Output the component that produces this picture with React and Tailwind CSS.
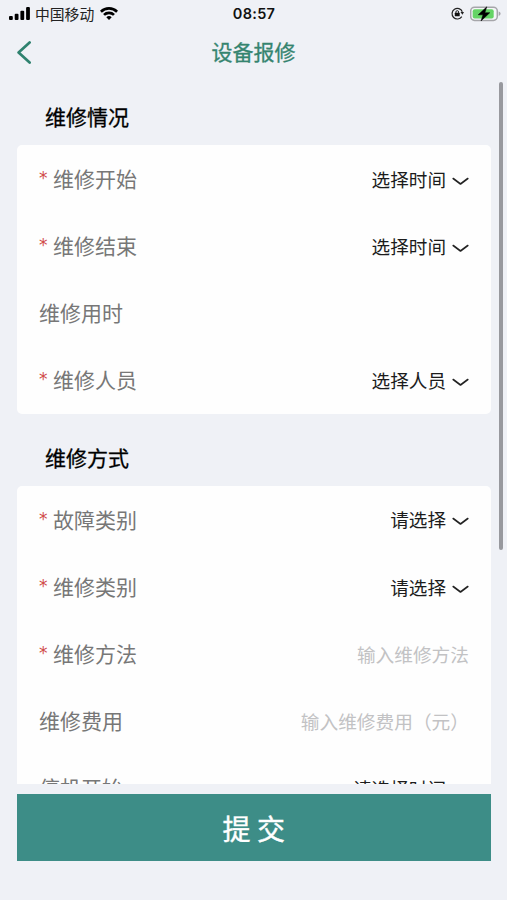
import React from "react";

const sections = [
  {
    title: "维修情况",
    rows: [
      { label: "维修开始", required: true, value: "选择时间" },
      { label: "维修结束", required: true, value: "选择时间" },
      { label: "维修用时" },
      { label: "维修人员", required: true, value: "选择人员" },
    ],
  },
  {
    title: "维修方式",
    rows: [
      { label: "故障类别", required: true, value: "请选择" },
      { label: "维修类别", required: true, value: "请选择" },
      { label: "维修方法", required: true, placeholder: "输入维修方法" },
      { label: "维修费用", placeholder: "输入维修费用（元）" },
      { label: "停机开始", value: "请选择时间" },
    ],
  },
];

const ChevronDown = () => (
  <svg className="ml-[6px] mt-[5px] h-[9px] w-[17px]" viewBox="0 0 17 9" fill="none">
    <path d="M1.2 1.5 L8.5 7 L15.8 1.5" stroke="#222" strokeWidth="1.6" strokeLinecap="round" strokeLinejoin="round" />
  </svg>
);

const StatusBar = () => (
  <div className="grid h-[27px] shrink-0 grid-cols-3 items-center pl-[9px] pr-[6px] text-black">
    <div className="flex items-center">
      <svg className="h-[13px] w-[21px]" viewBox="0 0 21 13">
        <rect x="0" y="9" width="3.8" height="4" rx="1" />
        <rect x="5.7" y="6.8" width="3.8" height="6.2" rx="1" />
        <rect x="11.4" y="3.8" width="3.8" height="9.2" rx="1" />
        <rect x="17.1" y="0" width="3.8" height="13" rx="1" />
      </svg>
      <span className="ml-[5px] text-[14.8px] leading-[26px] text-[#222]">中国移动</span>
      <svg className="ml-[6px] h-[13px] w-[18px] shrink-0" viewBox="0 0 18 13" fill="none" stroke="#000" strokeWidth="2.7">
        <path d="M0.9 4.7 A11.6 11.6 0 0 1 17.1 4.7" />
        <path d="M4 7.9 A7.1 7.1 0 0 1 14 7.9" />
        <path d="M9 13 L6.3 10.2 A3.9 3.9 0 0 1 11.7 10.2 Z" fill="#000" stroke="none" />
      </svg>
    </div>
    <span className="pr-[2px] text-center font-[Inter] text-[14.5px] font-semibold tracking-[0.3px] text-[#111]">08:57</span>
    <div className="flex items-center justify-end">
      <svg className="h-[13px] w-[13px]" viewBox="0 0 13 13" fill="none" stroke="#222">
        <path d="M10.8 9.6 A5.3 5.3 0 1 1 11.3 4.8" strokeWidth="1.2" />
        <path d="M9.5 5 L13 5 L11.4 7.8 Z" fill="#222" stroke="none" />
        <rect x="3.8" y="5.8" width="4.9" height="3.5" rx="0.5" fill="#111" stroke="none" />
        <path d="M4.9 6 V5 A1.35 1.35 0 0 1 7.6 5 V6" strokeWidth="1" />
      </svg>
      <svg className="ml-[6px] h-4 w-[31px]" viewBox="0 0 31 16">
        <rect x="0.7" y="1.2" width="26.6" height="13.2" rx="3.8" fill="#f4f5f7" stroke="#a6a6aa" strokeWidth="1.5" />
        <rect x="2.7" y="3.2" width="21" height="9.2" rx="2" fill="#65d465" />
        <path d="M28.7 5.6 Q30.6 6.2 30.6 7.8 Q30.6 9.4 28.7 10 Z" fill="#a6a6aa" />
        <path d="M16.8 0.8 L8.2 8.8 H13 L11 15 L19.8 6.7 H14.9 Z" fill="#000" stroke="#000" strokeWidth="0.5" />
      </svg>
    </div>
  </div>
);

const NavBar = () => (
  <div className="grid h-[51px] shrink-0 grid-cols-3 items-center px-4">
    <button className="w-6">
      <svg className="h-6 w-4" viewBox="0 0 16 24" fill="none">
        <path d="M13.6 1.5 L2.6 11.5 L13.6 21.5" stroke="#2f826f" strokeWidth="2.7" strokeLinecap="round" strokeLinejoin="round" />
      </svg>
    </button>
    <h1 className="pb-1 text-center text-[21px] leading-[46px] text-[#35846f] [-webkit-text-stroke:0.3px_#35846f]">设备报修</h1>
  </div>
);

const FormRow = ({ row }) => (
  <div className="flex h-[67.2px] items-center justify-between pl-[22.5px] pr-[22px]">
    <label className="flex items-center text-[21px] text-[#777]">
      {row.required && (
        <span className="w-[14px] font-['DejaVu_Sans'] text-[17px] text-[#d04a48]">*</span>
      )}
      {row.label}
    </label>
    {row.value && (
      <div className="flex items-center text-[18.6px] text-[#1c1c1c]">
        {row.value}
        <ChevronDown />
      </div>
    )}
    {row.placeholder && <span className="text-[18.7px] text-[#c2c2c4]">{row.placeholder}</span>}
  </div>
);

const App = () => {
  return (
    <div className="flex h-[900px] w-full flex-col overflow-hidden bg-[#eff1f6] font-['Noto_Sans_CJK_SC',sans-serif]">
      <StatusBar />
      <NavBar />
      <main className="relative h-[706px] shrink-0 overflow-hidden pl-[16.5px] pr-4">
        {sections.map((section, i) => (
          <section key={section.title} className={i === 0 ? "mt-[7px]" : "mt-[12px]"}>
            <h2 className="h-[60px] pl-[28.5px] text-[21px] leading-[62px] text-black [-webkit-text-stroke:0.3px_#000]">
              {section.title}
            </h2>
            <div className="rounded-[5px] bg-[#fefefe]">
              {section.rows.map((row) => (
                <FormRow key={row.label} row={row} />
              ))}
            </div>
          </section>
        ))}
        <div className="absolute right-[4px] top-1 h-[468px] w-1 rounded-full bg-[#98999e]" />
      </main>
      <div className="mt-[10px] pl-[16.5px] pr-4">
        <button className="h-[67px] w-full bg-[#3d8d87] text-[28px] text-white [-webkit-text-stroke:0.4px_#fff]">
          提 交
        </button>
      </div>
    </div>
  );
};

export default App;
